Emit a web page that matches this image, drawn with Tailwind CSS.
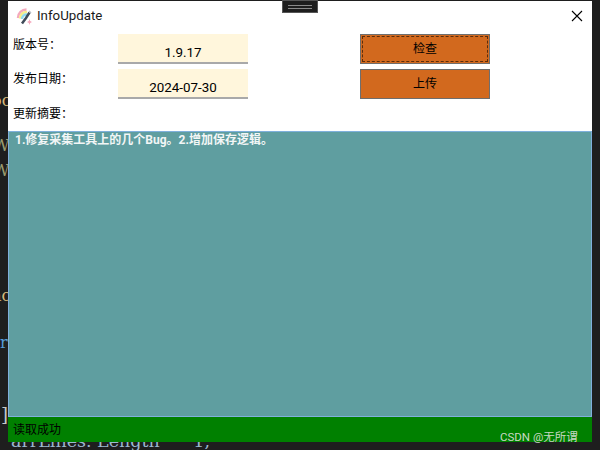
<!DOCTYPE html>
<html lang="en">

<head>
    <meta charset="UTF-8">
    <script src="https://cdn.jsdelivr.net/npm/@tailwindcss/browser@4"></script>
    <title>InfoUpdate</title>
</head>

<body class="w-[600px] h-[450px] overflow-hidden bg-[#1e1e1e] relative font-['Roboto','Noto_Sans_CJK_SC',sans-serif]">
    <!-- code editor behind the window, only its edges show -->
    <div class="absolute left-0 top-0 w-[8px] h-[442px] overflow-hidden font-['DejaVu_Serif',serif] text-[16px] leading-none">
        <span class="absolute left-[-8px] top-[93px] text-[#d7ba7d]">oc</span>
        <span class="absolute left-[-7px] top-[138px] text-[#9a9a6e]">W</span>
        <span class="absolute left-[-7px] top-[163px] text-[#9a9a6e]">W</span>
        <span class="absolute left-[-8px] top-[288px] text-[#d7ba7d]">ac</span>
        <span class="absolute left-[0px] top-[335px] text-[#569cd6]">r</span>
        <span class="absolute left-[1px] top-[406px] text-[18px] text-[#c8c8c8]">]</span>
    </div>
    <div class="absolute left-0 top-[442px] w-[600px] h-[8px] overflow-hidden font-['DejaVu_Serif',serif] text-[17.500px] leading-none">
        <span class="absolute left-[11px] top-[-9px] text-[#9cb8d0] whitespace-pre">arrLines. Length      1,</span>
    </div>

    <!-- window -->
    <div class="absolute left-[8px] top-[1px] w-[584px] h-[441px] bg-white flex flex-col">
        <!-- title bar -->
        <div class="h-[30px] flex items-center shrink-0 relative">
            <svg class="ml-[8px] mt-[1px]" width="16" height="17" viewBox="0 0 16 17" fill="none">
                <path d="M2 10 A8.500 8.500 0 0 1 10.500 1.500" stroke="#f5a9bd" stroke-width="2.500" />
                <path d="M4 10.500 A6.500 6.500 0 0 1 11 4" stroke="#f7ee8c" stroke-width="2.500" />
                <path d="M6 11 A4.500 4.500 0 0 1 11 6.500" stroke="#8ed9ef" stroke-width="2.500" />
                <path d="M13.500 4.500 L10 10 L6 15.500" stroke="#3f4b58" stroke-width="2.500" />
                <path d="M13 3 L15 5" stroke="#b9c0c8" stroke-width="1.500" />
                <path d="M13.500 11 L14.200 13 L16 14 L14.200 15 L13.500 17 L12.800 15 L11 14 L12.800 13Z" fill="#f5a9bd" />
            </svg>
            <span class="ml-[5px] mb-[1px] text-[13.300px] leading-none text-[#1a1a1a]">InfoUpdate</span>
            <svg class="ml-auto mr-[9px]" width="12" height="12" viewBox="0 0 12 12">
                <path d="M1 1 L11 11 M11 1 L1 11" stroke="#000" stroke-width="1.100" fill="none" />
            </svg>
        </div>

        <!-- form -->
        <div class="h-[100px] shrink-0 grid grid-cols-[110px_130px_112px_130px] grid-rows-[30px_30px_32px] gap-y-[5px] pt-[3px] text-[12px] text-black">
            <label class="pl-[5px] pt-[2px] leading-[18px]">版本号：</label>
            <div class="bg-[#fff6dc] border-b-2 border-[#a9a9a9] flex items-end justify-center text-[13.400px] leading-[18px]">1.9.17</div>
            <div></div>
            <button class="bg-[#d2691e] border border-[#6e6e6e] p-[1px] text-[12px]">
                <span class="flex items-center justify-center h-full border border-dashed border-[#5a2d0c]">检查</span>
            </button>

            <label class="pl-[5px] pt-[1px] leading-[18px]">发布日期：</label>
            <div class="bg-[#fff6dc] border-b-2 border-[#a9a9a9] flex items-end justify-center text-[13.400px] leading-[18px]">2024-07-30</div>
            <div></div>
            <button class="bg-[#d2691e] border border-[#6e6e6e] text-[12px]">上传</button>

            <label class="pl-[5px] pt-[1px] leading-[18px] col-span-4">更新摘要：</label>
        </div>

        <!-- summary -->
        <div class="flex-1 bg-[#5f9ea0] border border-[#7fb0dc] px-[6px] text-[12px] leading-[16px] font-bold text-[#f2f6f6]">1.修复采集工具上的几个Bug。2.增加保存逻辑。</div>

        <!-- status bar -->
        <div class="h-[25px] shrink-0 bg-[#008000] flex items-center pl-[5px] text-[12px] text-black">读取成功</div>
    </div>

    <!-- drag handle at the top -->
    <div class="absolute left-[282px] top-0 w-[36px] h-[13px] bg-[#1e1e1e] border border-[#555] flex flex-col justify-center gap-[2px] px-[5px]">
        <div class="h-px bg-[#8a8a8a]"></div>
        <div class="h-px bg-[#8a8a8a]"></div>
    </div>

    <!-- watermark -->
    <div class="absolute left-[500px] top-[430px] text-[11.500px] leading-[14px] text-[#c9d8c4]">CSDN @无所谓</div>
</body>

</html>
